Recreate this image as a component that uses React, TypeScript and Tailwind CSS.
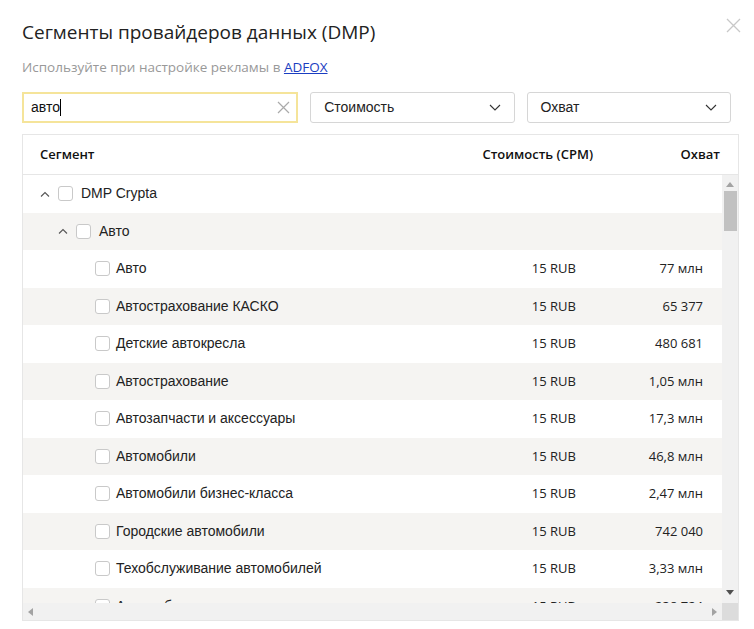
import React from "react";

const rows: { name: string; reach: string }[] = [
  { name: "Авто", reach: "77 млн" },
  { name: "Автострахование КАСКО", reach: "65 377" },
  { name: "Детские автокресла", reach: "480 681" },
  { name: "Автострахование", reach: "1,05 млн" },
  { name: "Автозапчасти и аксессуары", reach: "17,3 млн" },
  { name: "Автомобили", reach: "46,8 млн" },
  { name: "Автомобили бизнес-класса", reach: "2,47 млн" },
  { name: "Городские автомобили", reach: "742 040" },
  { name: "Техобслуживание автомобилей", reach: "3,33 млн" },
  { name: "Автомобили представительского класса", reach: "238 724" },
];

const sans = { fontFamily: '"Open Sans", "Noto Sans", sans-serif' };
const arial = { fontFamily: '"Liberation Sans", Arial, sans-serif' };

function Box() {
  return <span className="inline-block w-[15px] h-[15px] rounded-[3px] border border-[#c9c9c9] bg-white shrink-0" />;
}

function ChevUp() {
  return (
    <svg width="10" height="6" viewBox="0 0 10 6" className="shrink-0">
      <path d="M1 5.5 L5 1.5 L9 5.5" fill="none" stroke="#555" strokeWidth="1.1" />
    </svg>
  );
}

function ChevDown() {
  return (
    <svg width="12" height="7" viewBox="0 0 12 7">
      <path d="M1 1 L6 6 L11 1" fill="none" stroke="#333" strokeWidth="1.1" />
    </svg>
  );
}

export default function App() {
  return (
    <div className="w-[754px] h-[629px] bg-white relative overflow-hidden text-[#222]" style={arial}>
      <button className="absolute left-[726px] top-[18px] w-[15px] h-[15px]">
        <svg width="15" height="15" viewBox="0 0 15 15">
          <path d="M1 1 L14 14 M14 1 L1 14" stroke="#c8c8c8" strokeWidth="1.3" />
        </svg>
      </button>
      <div className="pl-[22px] pr-[16px]">
        <h1 className="pt-[18px] text-[19px] leading-[28px] text-[#222]" style={sans}>
          Сегменты провайдеров данных (DMP)
        </h1>
        <p className="mt-[12px] text-[13.5px] leading-[18px] text-[#999]" style={sans}>
          Используйте при настройке рекламы в{" "}
          <span className="text-[#1a3dc1] underline">ADFOX</span>
        </p>
        <div className="mt-[16px] flex gap-[12px] h-[31px] w-[709px]">
          <div className="w-[277px] border-2 border-[#f5e49a] flex items-center pl-[7px] pr-[6px]">
            <span className="text-[14px] text-[#111]">авто</span>
            <span className="w-px h-[17px] bg-black" />
            <span className="flex-1" />
            <svg width="13" height="13" viewBox="0 0 13 13">
              <path d="M1 1 L12 12 M12 1 L1 12" stroke="#aaa" strokeWidth="1.2" />
            </svg>
          </div>
          <div className="w-[205px] border border-[#d6d6d6] rounded-[3px] flex items-center justify-between pl-[13px] pr-[13px]">
            <span className="text-[14px] text-[#222]">Стоимость</span>
            <ChevDown />
          </div>
          <div className="w-[205px] border border-[#d6d6d6] rounded-[3px] flex items-center justify-between pl-[13px] pr-[13px]">
            <span className="text-[14px] text-[#222]">Охват</span>
            <ChevDown />
          </div>
        </div>
        <div className="mt-[11px] w-[717px] border border-[#e6e6e6] flex flex-col">
          <div className="h-[40px] flex items-center border-b border-[#e6e6e6] pl-[17px] pr-[18px] text-[13px] font-semibold text-[#111]" style={sans}>
            <span className="flex-1">Сегмент</span>
            <span className="text-right">Стоимость (CPM)</span>
            <span className="w-[127px] text-right">Охват</span>
          </div>
          <div className="flex h-[428px]">
            <div className="flex-1 overflow-hidden flex flex-col">
              <div className="h-[37.5px] shrink-0 flex items-center gap-[8px] pl-[17px] text-[14px]">
                <ChevUp />
                <Box />
                <span>DMP Crypta</span>
              </div>
              <div className="h-[37.5px] shrink-0 flex items-center gap-[8px] pl-[35px] text-[14px] bg-[#f5f4f2]">
                <ChevUp />
                <Box />
                <span>Авто</span>
              </div>
              {rows.map((r, i) => (
                <div
                  key={r.name}
                  className={`h-[37.5px] shrink-0 flex items-center pl-[72px] pr-[19px] text-[14px] ${i % 2 === 1 ? "bg-[#f5f4f2]" : "bg-white"}`}
                >
                  <Box />
                  <span className="ml-[6px] flex-1 whitespace-nowrap">{r.name}</span>
                  <span className="text-[13px] text-[#222]" style={sans}>15 RUB</span>
                  <span className="w-[127px] text-right text-[13px] text-[#222]" style={sans}>{r.reach}</span>
                </div>
              ))}
            </div>
            <div className="w-[16px] bg-[#f1f1f1] flex flex-col items-center">
              <svg width="8" height="5" viewBox="0 0 8 5" className="mt-[7px]">
                <path d="M0 5 L4 0 L8 5 Z" fill="#a3a3a3" />
              </svg>
              <div className="mt-[4px] w-[13px] h-[40px] bg-[#c1c1c1]" />
              <div className="flex-1" />
              <svg width="8" height="5" viewBox="0 0 8 5" className="mb-[8px]">
                <path d="M0 0 L8 0 L4 5 Z" fill="#505050" />
              </svg>
            </div>
          </div>
          <div className="h-[17px] flex bg-[#f1f1f1]">
            <div className="flex-1 flex items-center justify-between px-[5px]">
              <svg width="5" height="8" viewBox="0 0 5 8">
                <path d="M5 0 L0 4 L5 8 Z" fill="#a3a3a3" />
              </svg>
              <svg width="5" height="8" viewBox="0 0 5 8">
                <path d="M0 0 L5 4 L0 8 Z" fill="#a3a3a3" />
              </svg>
            </div>
            <div className="w-[16px] bg-[#dcdcdc]" />
          </div>
        </div>
      </div>
    </div>
  );
}
